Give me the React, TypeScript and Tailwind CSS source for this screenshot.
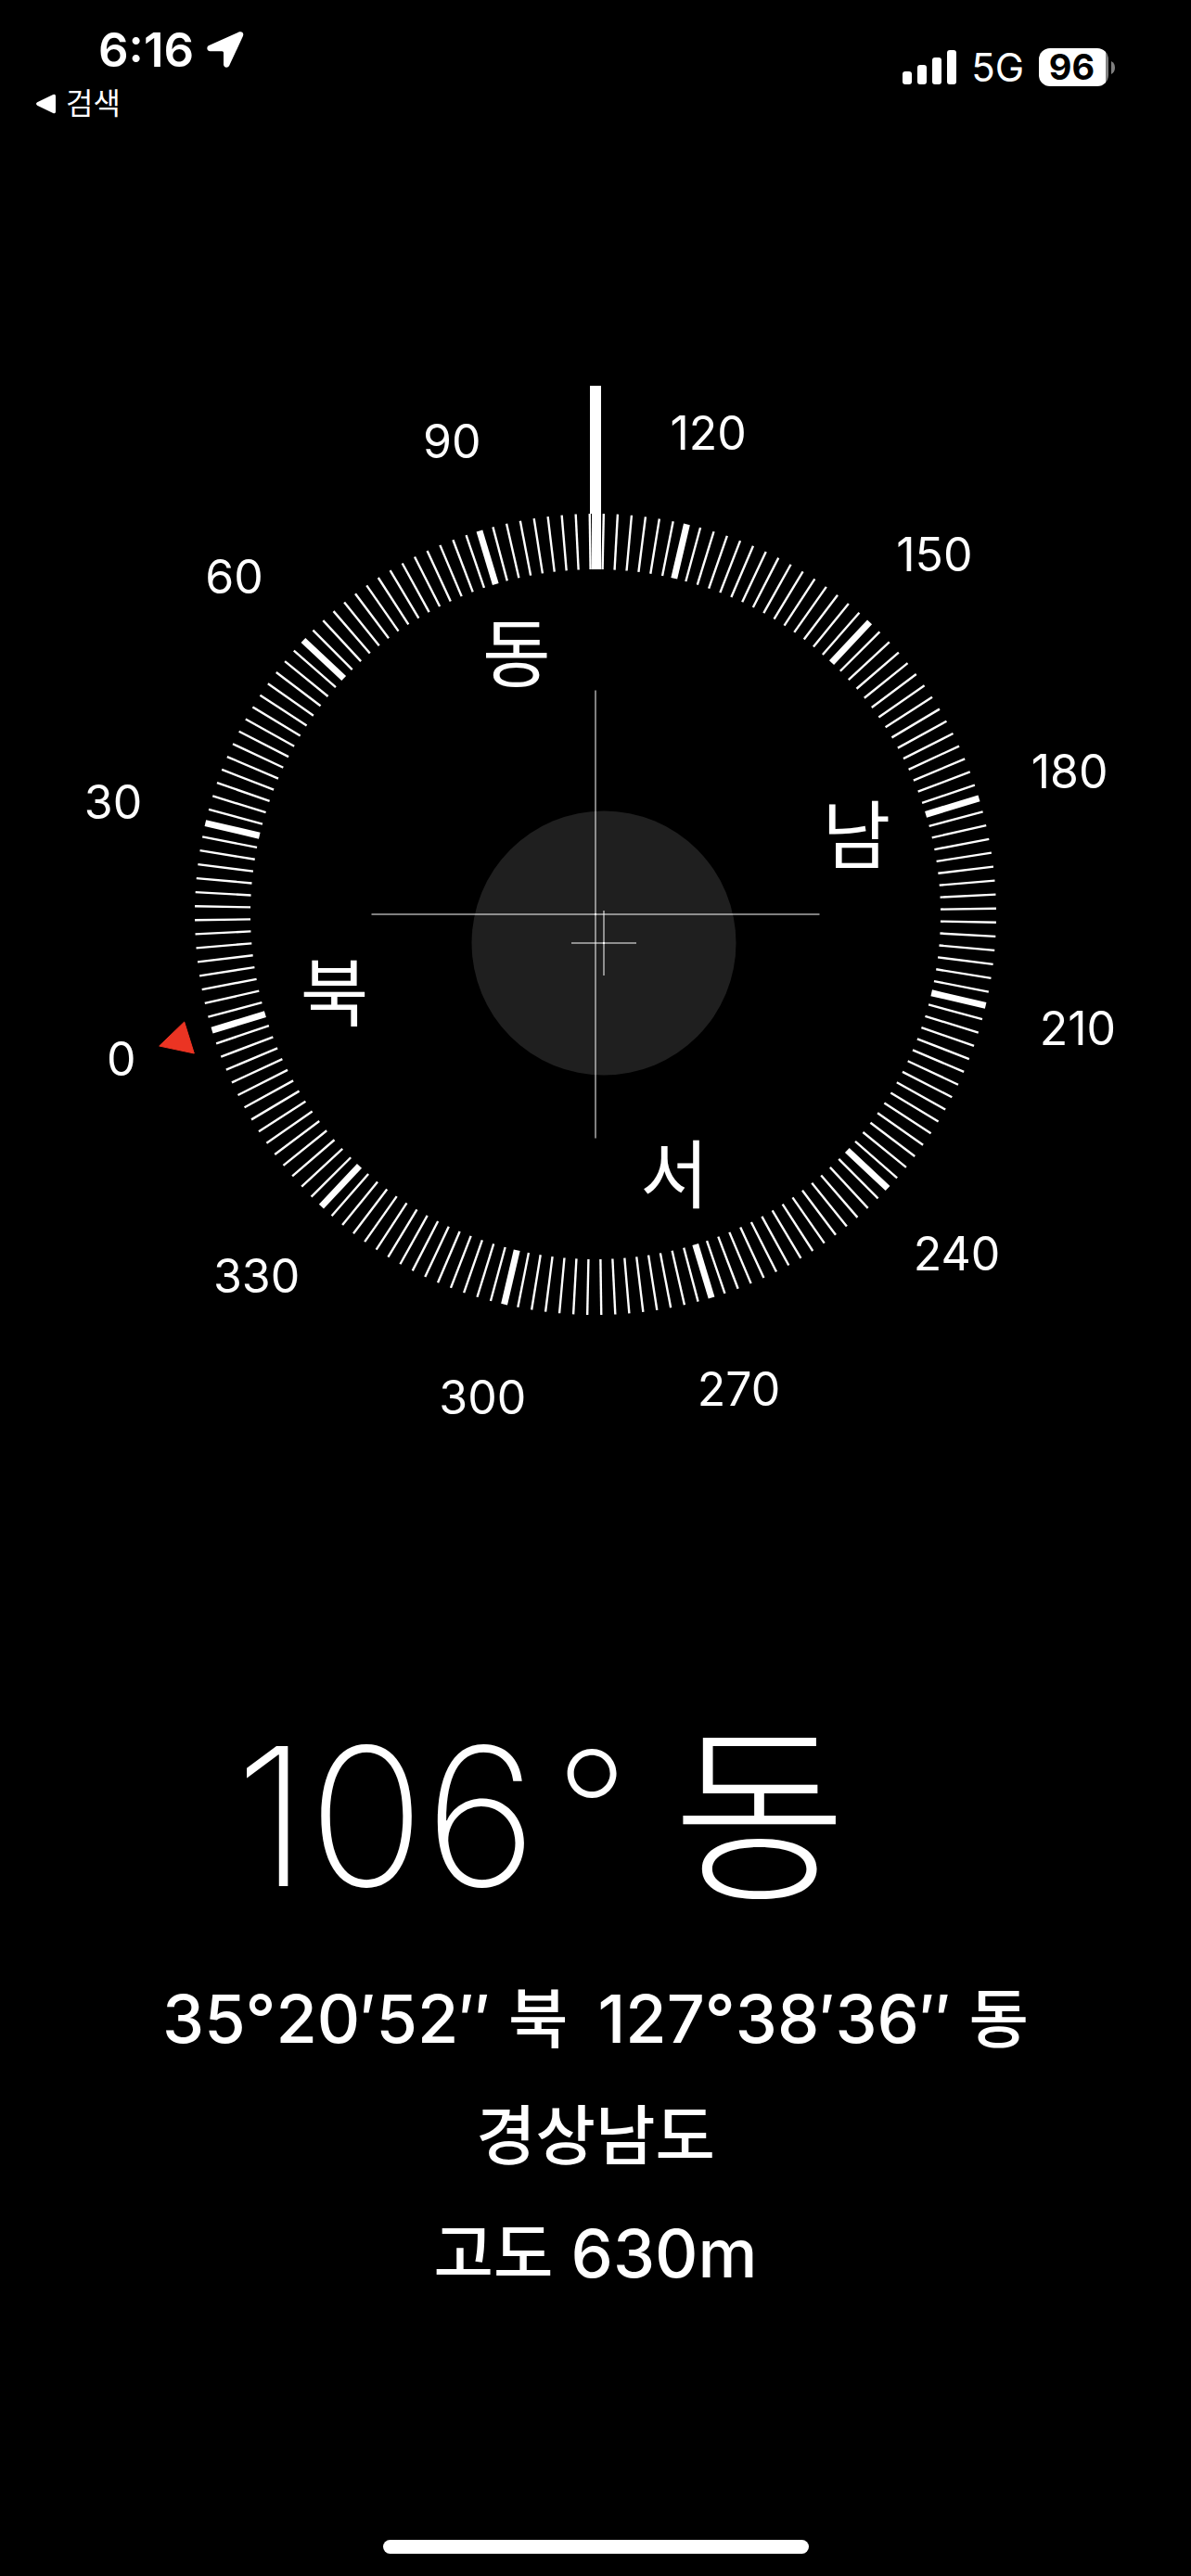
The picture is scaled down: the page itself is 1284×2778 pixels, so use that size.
import * as React from 'react'

const HEADING = 106.83
const CX = 642
const CY = 600
const RING_OUTER = 432
const RING_INNER = 372
const DEGREE_RADIUS = 534
const CARDINAL_RADIUS = 294

const ticks = Array.from({ length: 180 }, (_, i) => i * 2)
const degreeLabels = Array.from({ length: 12 }, (_, i) => i * 30)

const cardinals = [
  { degree: 0, label: '북' },
  { degree: 90, label: '동' },
  { degree: 180, label: '남' },
  { degree: 270, label: '서' },
]

const polar = (degree: number, radius: number) => {
  const rad = ((degree - HEADING) * Math.PI) / 180
  return { x: CX + radius * Math.sin(rad), y: CY - radius * Math.cos(rad) }
}

const StatusBar: React.FC = () => (
  <header className="flex items-start justify-between pl-[39px] pr-[82px] pt-6">
    <div className="flex flex-col">
      <div className="flex h-[60px] items-center gap-[14px] pl-[67px]">
        <time className="text-[51px] leading-[60px] font-semibold">6:16</time>
        <svg viewBox="0 0 40 40" className="size-10" fill="white" aria-hidden="true">
          <path d="M34.5 0.6 C37.8 -0.7 40.3 1.9 38.9 5.1 L24.2 36.8 C22.8 39.8 18 39.3 18 35.6 V22.7 Q18 21.2 16.5 21.2 H3.6 C-0.1 21.2 -0.9 16.5 2.3 15 Z" />
        </svg>
      </div>
      <a href="#search" className="mt-1 flex h-12 items-center gap-2.5 text-[32px] leading-[48px]">
        <svg viewBox="0 0 22 22" className="size-[22px]" fill="white" aria-hidden="true">
          <path d="M1.2 9.3 L18.2 1 Q21 -0.1 21 2.7 V19.3 Q21 22.1 18.2 20.9 L1.2 12.7 Q-1.2 11 1.2 9.3 Z" />
        </svg>
        검색
      </a>
    </div>

    <div className="flex h-[97px] items-center">
      <svg viewBox="0 0 58 38" className="h-[38px] w-[58px]" fill="white" aria-hidden="true">
        <rect x="0" y="23" width="10" height="14" rx="3" />
        <rect x="16" y="16" width="10" height="21" rx="3" />
        <rect x="32" y="8" width="10" height="29" rx="3" />
        <rect x="48" y="0" width="10" height="37" rx="3" />
      </svg>
      <span className="ml-4 text-[42px] leading-[48px]">5G</span>
      <div className="ml-4 flex items-center gap-[3px]">
        <div className="flex h-[41px] w-[75px] items-center justify-center rounded-[12px] bg-linear-to-r from-white from-96% to-[#808080] to-96% pr-1 text-[38px] leading-[41px] font-bold text-black">
          96
        </div>
        <svg viewBox="0 0 4 14" className="h-[14px] w-1" aria-hidden="true">
          <path d="M0 0 Q4 2 4 7 Q4 12 0 14 Z" fill="#808080" />
        </svg>
      </div>
    </div>
  </header>
)

/**
 * Rotating dial. The ring turns with the heading while the labels stay upright.
 */
const CompassDial: React.FC = () => (
  <svg viewBox="0 0 1284 1200" className="h-auto w-full" fill="white" role="img" aria-label="106°">
    {/* Level indicator */}
    <circle cx="651" cy="631" r="142.5" fill="#1f1f1f" />
    <g fillOpacity="0.5">
      <rect x="400.5" y="599" width="483" height="2" />
      <rect x="641" y="358.5" width="2" height="483" />
      <rect x="616" y="630" width="70" height="2" />
      <rect x="650" y="596" width="2" height="70" />
    </g>
    <rect x="641" y="599" width="2" height="2" />
    <rect x="650" y="630" width="2" height="2" />

    {ticks.map((degree) => {
      const isMajor = degree % 30 === 0
      const width = isMajor ? 7 : 2.4
      return (
        <rect
          key={degree}
          x={CX - width / 2}
          y={CY - RING_OUTER}
          width={width}
          height={RING_OUTER - RING_INNER}
          transform={`rotate(${degree - HEADING} ${CX} ${CY})`}
        />
      )
    })}

    {/* Heading needle */}
    <rect x="636" y="30" width="12" height="138" />
    <rect x="638" y="168" width="10" height="60" />

    {/* North marker */}
    <path d="M198.7 716 L171.7 742 L209.3 750 Z" fill="#eb3423" stroke="#eb3423" strokeLinejoin="round" />

    {degreeLabels.map((degree) => {
      const { x, y } = polar(degree, DEGREE_RADIUS)
      return (
        <text key={degree} x={x} y={y + 19} textAnchor="middle" className="text-[50px]">
          {degree}
        </text>
      )
    })}

    {cardinals.map(({ degree, label }) => {
      const { x, y } = polar(degree, CARDINAL_RADIUS)
      return (
        <text key={degree} x={x} y={y + 29} textAnchor="middle" className="text-[80px]">
          {label}
        </text>
      )
    })}
  </svg>
)

const Readout: React.FC = () => (
  <section className="flex flex-col items-center pt-[250px]">
    <h1 className="flex items-baseline gap-12 pr-[118px] text-[208px] leading-[244px] font-extralight">
      <span className="flex items-start gap-5">
        106
        <span className="text-[172px] leading-[228px]">°</span>
      </span>
      <span className="text-[204px] font-light">동</span>
    </h1>
    <div className="mt-8 flex flex-col items-center text-[72px] leading-[126px] font-medium">
      <p className="flex gap-8 whitespace-nowrap">
        <a href="#latitude">
          35°20′52″ <span className="text-[70px]">북</span>
        </a>
        <a href="#longitude">
          127°38′36″ <span className="text-[70px]">동</span>
        </a>
      </p>
      <p className="text-[70px]">경상남도</p>
      <p>
        <span className="text-[70px]">고도</span> 630m
      </p>
    </div>
  </section>
)

export default function App() {
  return (
    <main className="flex min-h-screen flex-col bg-black font-[Inter,'Noto_Sans_CJK_KR',sans-serif] text-white">
      <StatusBar />
      <div className="pt-[250px]">
        <CompassDial />
      </div>
      <Readout />
      <footer className="mt-auto flex justify-center pb-6">
        <div className="h-[15px] w-[459px] rounded-full bg-white" />
      </footer>
    </main>
  )
}
